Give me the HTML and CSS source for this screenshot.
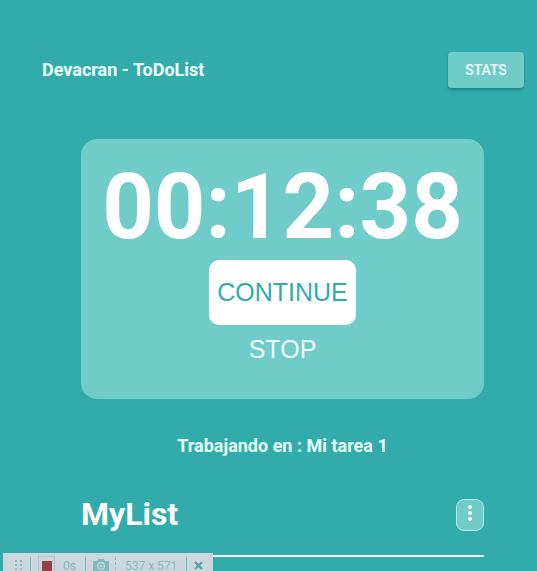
FILE: index.html
```html
<!DOCTYPE html>
<html lang="es">
<head>
<meta charset="utf-8">
<meta name="viewport" content="width=device-width, initial-scale=1">
<title>Devacran - ToDoList</title>
<link rel="stylesheet" href="styles.css">
</head>
<body>
<header class="topbar">
  <h1 class="brand">Devacran - ToDoList</h1>
  <button class="stats" type="button">STATS</button>
</header>
<main class="content">
  <section class="timer">
    <div class="clock">00:12:38</div>
    <button class="action action-primary" type="button">CONTINUE</button>
    <button class="action" type="button">STOP</button>
  </section>
  <p class="current">Trabajando en : Mi tarea 1</p>
  <section class="list-head">
    <h2 class="list-title">MyList</h2>
    <button class="menu" type="button" aria-label="Menu">
      <svg width="6" height="18" viewBox="0 0 6 18" fill="currentColor"><circle cx="3" cy="3" r="2"/><circle cx="3" cy="9" r="2"/><circle cx="3" cy="15" r="2"/></svg>
    </button>
  </section>
</main>
<div class="recorder">
  <svg class="grip" width="8" height="12" viewBox="0 0 8 12" fill="currentColor"><path d="M0 0h2v2H0zM5 0h2v2H5zM0 4h2v2H0zM5 4h2v2H5zM0 8h2v2H0zM5 8h2v2H5z"/></svg>
  <span class="divider"></span>
  <button class="record" type="button" aria-label="Stop recording"><span class="record-mark"></span></button>
  <span class="elapsed">0s</span>
  <span class="divider"></span>
  <button class="tool" type="button" aria-label="Snapshot">
    <svg width="16" height="13" viewBox="0 0 16 13"><path fill="currentColor" fill-rule="evenodd" d="M1 2h3l1-2h6l1 2h3a1 1 0 0 1 1 1v9a1 1 0 0 1-1 1H1a1 1 0 0 1-1-1V3a1 1 0 0 1 1-1zM8 3a4 4 0 1 0 0 8 4 4 0 0 0 0-8z"/><circle cx="8" cy="7" r="2" fill="none" stroke="currentColor" stroke-width="1.5"/></svg>
  </button>
  <span class="divider divider-dashed"></span>
  <span class="size">537 x 571</span>
  <span class="divider"></span>
  <button class="tool tool-close" type="button" aria-label="Close">
    <svg width="9" height="9" viewBox="0 0 9 9" fill="none" stroke="currentColor" stroke-width="2.4"><path d="M1 1l7 7M8 1L1 8"/></svg>
  </button>
</div>
</body>
</html>
```
FILE: styles.css
```css
* {
  box-sizing: border-box;
}

html {
  overflow: hidden;
}

body {
  margin: 0;
  background: #32acaa;
  color: #fff;
  font-family: Roboto, sans-serif;
}

button {
  margin: 0;
  padding: 0;
  border: 0;
  background: none;
  color: inherit;
  font: inherit;
  cursor: pointer;
}

.topbar {
  display: flex;
  align-items: center;
  justify-content: space-between;
  padding: 51px 13px 0 42px;
}

.brand {
  margin: 0;
  color: #f0fffd;
  font-size: 18px;
  font-weight: 700;
  line-height: 38px;
}

.stats {
  min-width: 76px;
  padding: 0 16px;
  border-radius: 4px;
  background: #70ccc8;
  box-shadow: 0 2px 3px rgba(0, 70, 70, 0.4);
  color: #eefffd;
  font-size: 14px;
  font-weight: 500;
  line-height: 36px;
}

.content {
  padding: 50px 53px 0 81px;
}

.timer {
  display: flex;
  flex-direction: column;
  align-items: center;
  padding: 16px 16px 25px;
  border-radius: 16px;
  background: #70ccc8;
}

.clock {
  font-size: 90px;
  font-weight: 700;
  line-height: 105px;
}

.action {
  padding: 0 8px;
  border-radius: 10px;
  color: #eefffd;
  font-family: "Liberation Sans", sans-serif;
  font-size: 25px;
  line-height: 49px;
}

.action-primary {
  background: #fff;
  color: #32acaa;
  line-height: 65px;
}

.current {
  margin: 36px 0 0;
  color: #e4fbf9;
  font-size: 18px;
  font-weight: 700;
  line-height: 22px;
  text-align: center;
}

.list-head {
  display: flex;
  align-items: center;
  justify-content: space-between;
  margin-top: 41px;
  padding-bottom: 24px;
  border-bottom: 2px solid #fff;
}

.list-title {
  margin: 0;
  font-size: 32px;
  font-weight: 700;
  line-height: 33px;
}

.menu {
  display: flex;
  align-items: center;
  justify-content: center;
  width: 28px;
  height: 32px;
  padding-bottom: 4px;
  border: 1px solid #b9eae7;
  border-radius: 8px;
  background: #70ccc8;
}

.recorder {
  position: fixed;
  bottom: -7px;
  left: 3px;
  display: flex;
  align-items: center;
  height: 25px;
  padding: 0 10px 0 12px;
  background: #cad7de;
  color: #84b9bb;
  font-size: 12px;
}

.divider {
  width: 1px;
  height: 18px;
  margin: 0 7px;
  background: #7dbbbb;
}

.divider-dashed {
  margin: 0 6px;
  background: none;
  border-left: 1px dashed #84b9bb;
}

.record {
  display: flex;
  align-items: center;
  justify-content: center;
  width: 17px;
  height: 19px;
  border: 1px solid #afc5cb;
}

.record-mark {
  width: 10px;
  height: 10px;
  background: #963f47;
}

.elapsed {
  margin: 0 2px 0 8px;
}

.size {
  margin: 0 2px 0 3px;
}

.tool {
  display: flex;
}

.tool-close {
  color: #55a5a5;
}
```
